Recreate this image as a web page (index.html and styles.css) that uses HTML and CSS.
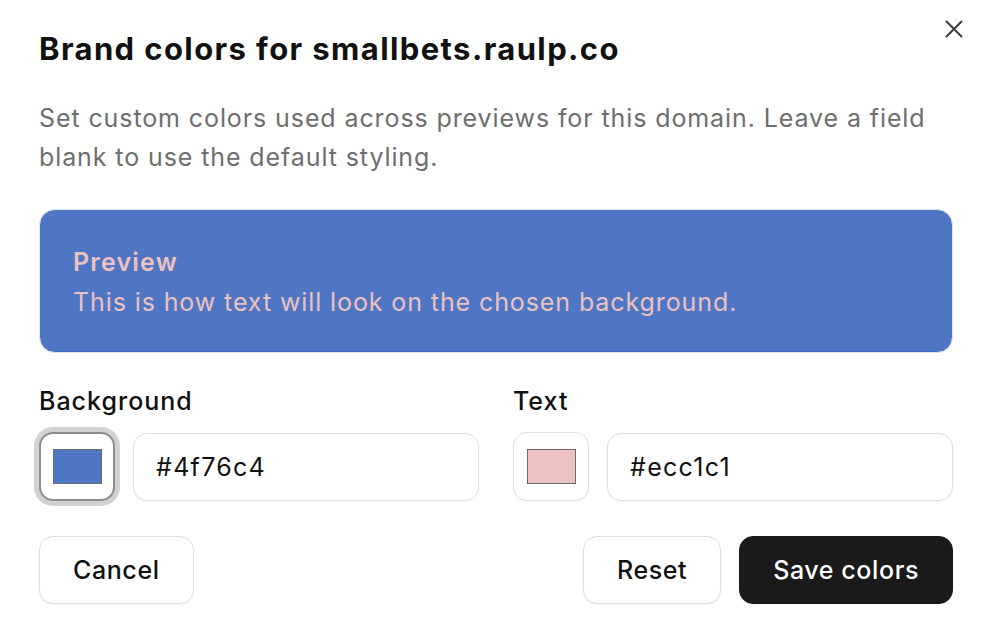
FILE: index.html
```html
<!DOCTYPE html>
<html lang="en">
<head>
<meta charset="utf-8">
<title>Brand colors</title>
<link rel="stylesheet" href="styles.css">
</head>
<body>
<div class="dialog">
  <button class="close" aria-label="Close">
    <svg width="18" height="18" viewBox="0 0 18 18"><path d="M1.5 1.5 L16.5 16.5 M16.5 1.5 L1.5 16.5" stroke="#3d3d3d" stroke-width="2" stroke-linecap="round" fill="none"/></svg>
  </button>
  <h1 class="title">Brand colors for smallbets.raulp.co</h1>
  <p class="desc">Set custom colors used across previews for this domain. Leave a field blank to use the default styling.</p>
  <div class="preview">
    <div class="preview-title">Preview</div>
    <div class="preview-text">This is how text will look on the chosen background.</div>
  </div>
  <div class="fields">
    <div class="field">
      <div class="label">Background</div>
      <div class="field-row">
        <button class="swatch focused"><span class="chip chip-bg"></span></button>
        <div class="input">#4f76c4</div>
      </div>
    </div>
    <div class="field">
      <div class="label">Text</div>
      <div class="field-row">
        <button class="swatch"><span class="chip chip-text"></span></button>
        <div class="input">#ecc1c1</div>
      </div>
    </div>
  </div>
  <div class="actions">
    <button class="btn">Cancel</button>
    <div class="spacer"></div>
    <button class="btn">Reset</button>
    <button class="btn primary">Save colors</button>
  </div>
</div>
</body>
</html>
```

FILE: styles.css
```css
* { box-sizing: border-box; }
html, body { margin: 0; padding: 0; background: #ffffff; }
body {
  font-family: Inter, "Noto Sans", "Liberation Sans", sans-serif;
  color: #111111;
  width: 1000px;
  height: 631px;
  overflow: hidden;
}
.dialog {
  position: relative;
  padding: 31px 47px 0 39px;
}
.close {
  position: absolute;
  top: 20px;
  left: 945px;
  width: 18px;
  height: 18px;
  padding: 0;
  border: 0;
  background: none;
  display: block;
}
.close svg { display: block; }
.title {
  margin: 0;
  font-size: 31px;
  line-height: 36px;
  font-weight: 700;
  letter-spacing: 1.4px;
  color: #111111;
}
.desc {
  margin: 32px 0 0;
  font-size: 25px;
  line-height: 39px;
  letter-spacing: 0.9px;
  color: #6e6e6e;
  font-weight: 400;
}
.preview {
  margin-top: 32px;
  height: 144px;
  background: #4f76c4;
  border: 1px solid #e2e4ea;
  border-radius: 16px;
  padding: 34px 32px 32px 33px;
  color: #ecc1c1;
  box-shadow: inset 0 -1px 0 #3e68c6;
}
.preview-title {
  font-size: 25px;
  line-height: 36px;
  font-weight: 600;
  letter-spacing: 1.2px;
}
.preview-text {
  margin-top: 4px;
  font-size: 25px;
  line-height: 36px;
  font-weight: 400;
  letter-spacing: 0.9px;
}
.fields {
  margin-top: 32px;
  display: grid;
  grid-template-columns: 1fr 1fr;
  column-gap: 34px;
}
.label {
  font-size: 25px;
  line-height: 32px;
  font-weight: 500;
  letter-spacing: 1px;
  margin-bottom: 15px;
}
.field-row {
  display: flex;
  gap: 18px;
  align-items: center;
}
.swatch {
  flex: 0 0 76px;
  height: 69px;
  background: #ffffff;
  border: 1.5px solid #e0e0e0;
  border-radius: 14px;
  display: flex;
  align-items: center;
  justify-content: center;
  padding: 0;
  box-shadow: 0 1px 2px rgba(0,0,0,0.05);
}
.swatch.focused {
  border: 2px solid #8e8e8e;
  box-shadow: 0 0 0 5px #d2d2d2;
}
.chip {
  display: block;
  width: 49px;
  height: 35px;
  border: 1.5px solid #6b6b6b;
}
.chip-bg { background: #4f76c4; }
.chip-text { background: #ecc1c1; }
.input {
  flex: 1;
  height: 68px;
  border: 1.5px solid #e0e0e0;
  border-radius: 14px;
  padding: 0 22px;
  display: flex;
  align-items: center;
  font-size: 25px;
  letter-spacing: 1.3px;
  color: #111111;
  box-shadow: 0 1px 2px rgba(0,0,0,0.05);
}
.actions {
  margin-top: 35px;
  display: flex;
  gap: 18px;
  align-items: center;
}
.spacer { flex: 1; }
.btn {
  font-family: inherit;
  height: 68px;
  padding: 0 33px;
  font-size: 25px;
  font-weight: 500;
  letter-spacing: 0.6px;
  color: #111111;
  background: #ffffff;
  border: 1.5px solid #e0e0e0;
  border-radius: 14px;
  box-shadow: 0 1px 2px rgba(0,0,0,0.05);
}
.btn.primary {
  background: #1a1a1a;
  border-color: #1a1a1a;
  color: #ffffff;
}
```
